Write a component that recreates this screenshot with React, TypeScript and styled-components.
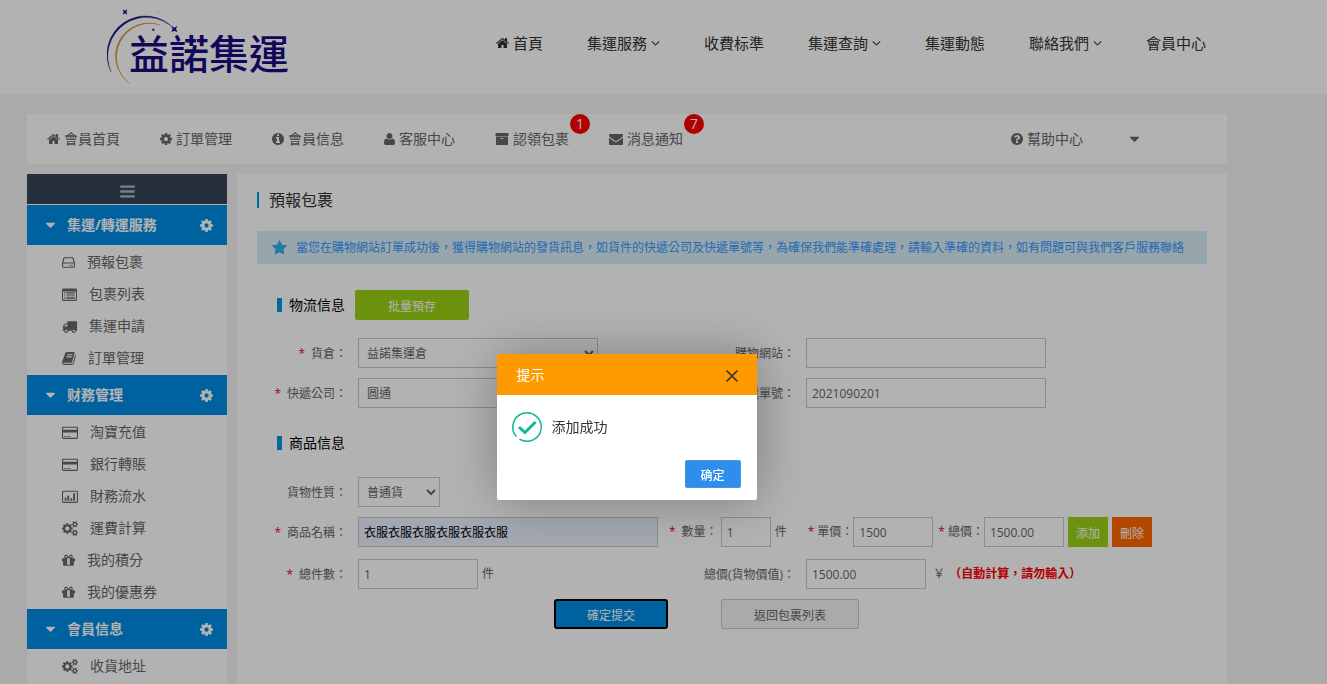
import React from "react";
import styled, { createGlobalStyle, css } from "styled-components";

const GlobalStyle = createGlobalStyle`
  * { box-sizing: border-box; }
  body {
    margin: 0;
    background: #f4f4f4;
    color: #666;
    font: 12px/20px "Open Sans", "Noto Sans CJK TC", sans-serif;
  }
  a { color: inherit; text-decoration: none; }
  ul, h1, h2, h3, p { margin: 0; padding: 0; list-style: none; font-weight: 400; }
  button, input, select { font: inherit; color: inherit; margin: 0; }
`;

/* ---------- icons ---------- */

const disc =
  "m640 -480q0 209-103 385.5t-279.5 279.5-385.5 103-385.5-103-279.5-279.5-103-385.5 103-385.5 279.5-279.5 385.5-103 385.5 103 279.5 279.5 103 385.5z";
const smallCog =
  "v140q0 16-149 31-12 27-30 52 51 113 51 138 0 4-4 7-122 71-124 71-8 0-46-47t-52-68q-20 2-30 2t-30-2q-14 21-52 68t-46 47q-2 0-124-71-4-3-4-7 0-25 51-138-18-25-30-52-149-15-149-31v-140q0-16 149-31 13-29 30-52-51-113-51-138 0-4 4-7 4-2 35-20t59-34 30-16q8 0 46 46.5t52 67.5q20-2 30-2t30 2q51-71 92-112l6-2q4 0 124 70 4 3 4 7 0 25-51 138 17 23 30 52 149 15 149 31z";

const icons = {
  home: [64, 1664, "M1472 992v480q0 26-19 45t-45 19h-384v-384h-256v384h-384q-26 0-45-19t-19-45v-480q0-1 .5-3t.5-3l575-474 575 474q1 2 1 6zm223-69l-62 74q-8 9-21 11h-3q-13 0-21-7l-692-577-692 577q-12 8-24 7-13-2-21-11l-62-74q-8-10-7-23.5t11-21.5l719-599q32-26 76-26t76 26l244 204v-195q0-14 9-23t23-9h192q14 0 23 9t9 23v408l219 182q10 8 11 21.5t-7 23.5z"],
  cog: [128, 1536, "M1152 896q0-106-75-181t-181-75-181 75-75 181 75 181 181 75 181-75 75-181zm512-109v222q0 12-8 23t-20 13l-185 28q-19 54-39 91 35 50 107 138 10 12 10 25t-9 23q-27 37-99 108t-94 71q-12 0-26-9l-138-108q-44 23-91 38-16 136-29 186-7 28-36 28h-222q-14 0-24.5-8.5t-11.5-21.5l-28-184q-49-16-90-37l-141 107q-10 9-25 9-14 0-25-11-126-114-165-168-7-10-7-23 0-12 8-23 15-21 51-66.5t54-70.5q-27-50-41-99l-183-27q-13-2-21-12.5t-8-23.5v-222q0-12 8-23t19-13l186-28q14-46 39-92-40-57-107-138-10-12-10-24 0-10 9-23 26-36 98.5-107.5t94.5-71.5q13 0 26 10l138 107q44-23 91-38 16-136 29-186 7-28 36-28h222q14 0 24.5 8.5t11.5 21.5l28 184q49 16 90 37l142-107q9-9 24-9 13 0 25 10 129 119 165 170 7 8 7 22 0 12-8 23-15 21-51 66.5t-54 70.5q26 50 41 98l183 28q13 2 21 12.5t8 23.5z"],
  info: [128, 1536, "M1152 1376v-160q0-14-9-23t-23-9h-96v-512q0-14-9-23t-23-9h-320q-14 0-23 9t-9 23v160q0 14 9 23t23 9h96v320h-96q-14 0-23 9t-9 23v160q0 14 9 23t23 9h448q14 0 23-9t9-23zm-128-896v-160q0-14-9-23t-23-9h-192q-14 0-23 9t-9 23v160q0 14 9 23t23 9h192q14 0 23-9t9-23z" + disc.replace("m640 -480", "m640 416")],
  user: [192, 1408, "M1600 1405q0 120-73 189.5t-194 69.5h-874q-121 0-194-69.5t-73-189.5q0-53 3.5-103.5t14-109 26.5-108.500 43-97.500 62-81 85.500-53.500 111.500-20q9 0 42 21.500t74.500 48 108 48 133.500 21.500 133.500-21.500 108-48 74.500-48 42-21.500q61 0 111.500 20t85.500 53.500 62 81 43 97.500 26.500 108.500 14 109 3.500 103.500zm-320-893q0 159-112.500 271.500t-271.500 112.500-271.500-112.500-112.500-271.500 112.500-271.500 271.500-112.500 271.500 112.500 112.500 271.500z"],
  archive: [0, 1792, "M1088 832q0-26-19-45t-45-19h-256q-26 0-45 19t-19 45 19 45 45 19h256q26 0 45-19t19-45zm576-192v960q0 26-19 45t-45 19h-1408q-26 0-45-19t-19-45v-960q0-26 19-45t45-19h1408q26 0 45 19t19 45zm64-448v256q0 26-19 45t-45 19h-1536q-26 0-45-19t-19-45v-256q0-26 19-45t45-19h1536q26 0 45 19t19 45z"],
  envelope: [0, 1792, "M1792 710v794q0 66-47 113t-113 47h-1472q-66 0-113-47t-47-113v-794q44 49 101 87 362 246 497 345 57 42 92.5 65.5t94.5 48 110 24.5h2q51 0 110-24.5t94.5-48 92.5-65.5q170-123 498-345 57-39 100-87zm0-294q0 79-49 151t-122 123q-376 261-468 325-10 7-42.5 30.5t-54 38-52 32.5-57.5 27-50 9h-2q-23 0-50-9t-57.5-27-52-32.5-54-38-42.5-30.5q-91-64-262-182.5t-205-142.5q-62-42-117-115.5t-55-136.5q0-78 41.5-130t118.5-52h1472q65 0 112.5 47t47.5 113z"],
  question: [128, 1536, "M1024 1376v-192q0-14-9-23t-23-9h-192q-14 0-23 9t-9 23v192q0 14 9 23t23 9h192q14 0 23-9t9-23zm256-672q0-88-55.5-163t-138.5-116-170-41q-243 0-371 213-15 24 8 42l132 100q7 6 19 6 16 0 25-12 53-68 86-92 34-24 86-24 48 0 85.5 26t37.5 59q0 38-20 61t-68 45q-63 28-115.5 86.5t-52.5 125.5v36q0 14 9 23t23 9h192q14 0 23-9t9-23q0-19 21.5-49.5t54.5-49.5q32-18 49-28.5t46-35 44.5-48 28-60.5 12.500-81z" + disc.replace("m640 -480", "m384 192")],
  caret: [384, 1024, "M1408 704q0 26-19 45l-448 448q-19 19-45 19t-45-19l-448-448q-19-19-19-45t19-45 45-19h896q26 0 45 19t19 45z"],
  angle: [320, 1152, "M1395 736q0 13-10 23l-466 466q-10 10-23 10t-23-10l-466-466q-10-10-10-23t10-23l50-50q10-10 23-10t23 10l393 393 393-393q10-10 23-10t23 10l50 50q10 10 10 23z"],
  bars: [128, 1536, "M1664 1344v128q0 26-19 45t-45 19h-1408q-26 0-45-19t-19-45v-128q0-26 19-45t45-19h1408q26 0 45 19t19 45zm0-512v128q0 26-19 45t-45 19h-1408q-26 0-45-19t-19-45v-128q0-26 19-45t45-19h1408q26 0 45 19t19 45zm0-512v128q0 26-19 45t-45 19h-1408q-26 0-45-19t-19-45v-128q0-26 19-45t45-19h1408q26 0 45 19t19 45z"],
  star: [64, 1664, "M1728 647q0 22-26 48l-363 354 86 500q1 7 1 20 0 21-10.5 35.5t-30.5 14.5q-19 0-40-12l-449-236-449 236q-22 12-40 12-21 0-31.5-14.5t-10.5-35.5q0-6 2-20l86-500-364-354q-25-27-25-48 0-37 56-46l502-73 225-455q19-41 49-41t49 41l225 455 502 73q56 9 56 46z"],
  gift: [128, 1536, "M1055 1356v-716h-320v716q0 25 18 38.5t46 13.5h192q28 0 46-13.5t18-38.5zm-456-844h195l-126-161q-26-31-69-31-40 0-68 28t-28 68 28 68 68 28zm688-96q0-40-28-68t-68-28q-43 0-69 31l-125 161h194q40 0 68-28t28-68zm376 256v320q0 14-9 23t-23 9h-96v416q0 40-28 68t-68 28h-1088q-40 0-68-28t-28-68v-416h-96q-14 0-23-9t-9-23v-320q0-14 9-23t23-9h440q-93 0-158.5-65.5t-65.5-158.5 65.5-158.5 158.5-65.5q107 0 168 77l128 165 128-165q61-77 168-77 93 0 158.5 65.5t65.5 158.5-65.5 158.5-158.5 65.5h440q14 0 23 9t9 23z"],
  book: [64, 1664, "M1703 478q40 57 18 129l-275 906q-19 64-76.5 107.5t-122.5 43.5h-923q-77 0-148.5-53.5t-99.5-131.5q-24-67-2-127 0-4 3-27t4-37q1-8-3-21.5t-3-19.5q2-11 8-21t16.5-23.5 16.5-23.5q23-38 45-91.5t30-91.5q3-10 .5-30t-.5-28q3-11 17-28t17-23q21-36 42-92t25-90q1-9-2.5-32t.5-28q4-13 22-30.5t22-22.5q19-26 42.5-84.5t27.5-96.5q1-8-3-25.5t-2-26.5q2-8 9-18t18-23 17-21q8-12 16.5-30.5t15-35 16-36 19.5-32 26.5-23.5 36-11.5 47.5 5.5l-1 3q38-9 51-9h761q74 0 114 56t18 130l-274 906q-36 119-71.5 153.5t-128.5 34.5h-869q-27 0-38 15-11 16-1 43 24 70 144 70h923q29 0 56-15.5t35-41.5l300-987q7-22 5-57 38 15 59 43zm-1064 2q-4 13 2 22.5t20 9.5h608q13 0 25.5-9.5t16.5-22.5l21-64q4-13-2-22.5t-20-9.5h-608q-13 0-25.5 9.5t-16.5 22.5zm-83 256q-4 13 2 22.5t20 9.5h608q13 0 25.5-9.5t16.5-22.5l21-64q4-13-2-22.5t-20-9.5h-608q-13 0-25.5 9.5t-16.5 22.5z"],
  truck: [0, 1792, "M640 1408q0-52-38-90t-90-38-90 38-38 90 38 90 90 38 90-38 38-90zm-384-512h384v-256h-158q-13 0-22 9l-195 195q-9 9-9 22v30zm1280 512q0-52-38-90t-90-38-90 38-38 90 38 90 90 38 90-38 38-90zm256-1088v1024q0 15-4 26.5t-13.5 18.5-16.5 11.5-23.5 6-22.5 2-25.5 0-22.5-.5q0 106-75 181t-181 75-181-75-75-181h-384q0 106-75 181t-181 75-181-75-75-181h-64q-3 0-22.5.5t-25.5 0-22.5-2-23.5-6-16.5-11.5-13.5-18.5-4-26.5q0-26 19-45t45-19v-320q0-8-.5-35t0-38 2.5-34.5 6.5-37 14-30.5 22.5-30l198-198q19-19 50.5-32t58.5-13h160v-192q0-26 19-45t45-19h1024q26 0 45 19t19 45z"],
  cogs: [-64, 1920, "M832 896q0-106-75-181t-181-75-181 75-75 181 75 181 181 75 181-75 75-181zm768 512q0-52-38-90t-90-38-90 38-38 90q0 53 37.5 90.5t90.5 37.5 90.5-37.5 37.5-90.5zm0-1024q0-52-38-90t-90-38-90 38-38 90q0 53 37.5 90.5t90.5 37.5 90.5-37.5 37.5-90.5zm-384 421v185q0 10-7 19.5t-16 10.5l-155 24q-11 35-32 76 34 48 90 115 7 11 7 20 0 12-7 19-23 30-82.5 89.5t-78.5 59.5q-11 0-21-7l-115-90q-37 19-77 31-11 108-23 155-7 24-30 24h-186q-11 0-20-7.5t-10-17.5l-23-153q-34-10-75-31l-118 89q-7 7-20 7-11 0-21-8-144-133-144-160 0-9 7-19 10-14 41-53t47-61q-23-44-35-82l-152-24q-10-1-17-9.5t-7-19.5v-185q0-10 7-19.5t16-10.5l155-24q11-35 32-76-34-48-90-115-7-11-7-20 0-12 7-20 22-30 82-89t79-59q11 0 21 7l115 90q34-18 77-32 11-108 23-154 7-24 30-24h186q11 0 20 7.5t10 17.5l23 153q34 10 75 31l118-89q8-7 20-7 11 0 21 8 144 133 144 160 0 8-7 19-12 16-42 54t-45 60q23 48 34 82l152 23q10 2 17 10.5t7 19.5zm640 533" + smallCog + "m0-1024" + smallCog],
  hdd: [0, 1536, "M250 256h1036q60 0 95 60l155 640v420q0 160-160 160h-1216q-160 0-160-160v-420l155-640q35-60 95-60zM290 384l-130 512h1216l-130-512zM128 1024v340q0 44 44 44h1192q44 0 44-44v-340zM840 1150h160v130h-160zM1100 1150h160v130h-160z"],
  list: [0, 1792, "M160 192h1472q160 0 160 160v1152q0 160-160 160h-1472q-160 0-160-160v-1152q0-160 160-160zM128 540v940q0 56 56 56h1424q56 0 56-56v-940zM256 640h128v128h-128zM256 896h128v128h-128zM256 1152h128v128h-128zM512 640h1024v128h-1024zM512 896h1024v128h-1024zM512 1152h1024v128h-1024zM256 1340h128v80h-128zM512 1340h1024v80h-1024z"],
  card: [0, 1920, "M160 192h1600q160 0 160 160v1152q0 160-160 160h-1600q-160 0-160-160v-1152q0-160 160-160zM128 352v224h1664v-224q0-32-32-32h-1600q-32 0-32 32zM128 900v604q0 32 32 32h1600q32 0 32-32v-604zM256 1344h256v96h-256zM600 1344h384v96h-384z"],
  chart: [0, 1920, "M160 192h1600q160 0 160 160v1152q0 160-160 160h-1600q-160 0-160-160v-1152q0-160 160-160zM160 320q-32 0-32 32v1152q0 32 32 32h1600q32 0 32-32v-1152q0-32-32-32zM320 1024h220v384h-220zM640 768h220v640h-220zM1000 1100h220v308h-220zM1340 512h220v896h-220z"],
} as const;

type IconName = keyof typeof icons;

const Glyph = styled.svg`
  flex: none;
  fill: currentColor;
  fill-rule: evenodd;
`;

function Icon({ name, size = 14 }: { name: IconName; size?: number }) {
  const [x, w, d] = icons[name];
  return (
    <Glyph viewBox={`${x} 0 ${w} 1792`} width={Math.round((w * size) / 1792)} height={size} aria-hidden="true">
      <path d={d} />
    </Glyph>
  );
}

/* ---------- page header ---------- */

const Page = styled.div`
  min-height: 100vh;
  display: flex;
  flex-direction: column;
`;

const Header = styled.header`
  height: 94px;
  padding: 0 121px 0 107px;
  display: flex;
  align-items: center;
  justify-content: space-between;
  background: #fff;
`;

const Logo = styled.a`
  position: relative;
  height: 94px;
  padding: 15px 0 0 22px;
  color: #1e0b80;
  font-size: 40px;
  line-height: 78px;
  font-weight: 500;
  white-space: nowrap;
`;

const LogoArc = styled.svg`
  position: absolute;
  left: 0;
  top: 7px;
`;

const SiteNav = styled.nav`
  display: flex;
  gap: 44px;
  padding-bottom: 8px;
  color: #333;
  font-size: 15px;
  white-space: nowrap;
`;

const NavLink = styled.a`
  display: flex;
  align-items: center;
  gap: 4px;
`;

/* ---------- member bar ---------- */

const Wrapper = styled.div`
  flex: 1;
  display: flex;
  flex-direction: column;
  gap: 10px;
  margin: 20px 100px 0 27px;
`;

const MemberBar = styled.nav`
  height: 50px;
  display: flex;
  padding: 0 88px 0 20px;
  background: #fff;
  font-size: 14px;
  white-space: nowrap;
`;

const MemberLink = styled(NavLink)<{ $end?: boolean }>`
  position: relative;
  margin-right: 40px;
  ${(p) => p.$end && css`margin: 0 47px 0 auto;`}
`;

const Badge = styled.span`
  position: absolute;
  top: 0;
  left: 100%;
  width: 20px;
  height: 20px;
  margin-left: 1px;
  border-radius: 50%;
  background: #f00;
  color: #fff;
  text-align: center;
`;

const CaretButton = styled.button`
  display: flex;
  align-items: center;
  padding: 0;
  border: 0;
  background: none;
`;

const Columns = styled.div`
  flex: 1;
  display: flex;
  gap: 10px;
`;

/* ---------- sidebar ---------- */

const Sidebar = styled.aside`
  flex: none;
  width: 200px;
  background: #fff;
  font-size: 14px;
`;

const Collapse = styled.button`
  width: 100%;
  height: 30px;
  display: flex;
  align-items: center;
  justify-content: center;
  padding: 5px 0 0;
  border: 0;
  background: #3a4456;
  color: #aeb9c2;
`;

const GroupTitle = styled.h2`
  display: flex;
  align-items: center;
  height: 40px;
  margin: 1px 0;
  padding: 0 14px 0 19px;
  background: #008ce4;
  color: #fff;
  font-size: 14px;
  font-weight: 700;
  gap: 12px;
`;

const GroupName = styled.span`
  flex: 1;
`;

const MenuLink = styled.a`
  display: flex;
  align-items: center;
  gap: 12px;
  height: 32px;
  padding-left: 35px;
`;

/* ---------- content ---------- */

const Main = styled.main`
  flex: 1;
  min-width: 0;
  padding: 18px 20px;
  background: #fff;
`;

const PageTitle = styled.h1`
  padding-left: 10px;
  border-left: 2px solid #0099e5;
  color: #333;
  font-size: 16px;
  line-height: 16px;
`;

const Notice = styled.p`
  display: flex;
  align-items: center;
  gap: 9px;
  height: 33px;
  margin-top: 23px;
  padding-left: 15px;
  background: #d9edf7;
  color: #39f;
  white-space: nowrap;

  svg { color: #31b0ee; }
`;

const Section = styled.div<{ $gap: number }>`
  display: flex;
  align-items: center;
  gap: 10px;
  height: 30px;
  margin-top: ${(p) => p.$gap}px;
  padding-left: 20px;
`;

const SectionTitle = styled.h3`
  padding-left: 7px;
  border-left: 5px solid #0099e5;
  color: #000;
  font-size: 14px;
  line-height: 14px;
`;

const Row = styled.div<{ $gap?: number }>`
  display: grid;
  grid-template-columns: 101px 338px 110px 1fr;
  align-items: center;
  height: 30px;
  margin-top: ${(p) => p.$gap ?? 10}px;
  white-space: nowrap;
`;

const Label = styled.label`
  padding: 2px 11px 0 0;
  text-align: right;
`;

const Star = styled.span<{ $tight?: boolean }>`
  margin-right: ${(p) => (p.$tight ? 3 : 6)}px;
  color: #e60012;
`;

const control = css<{ $w: number }>`
  width: ${(p) => p.$w}px;
  height: 30px;
  border: 1px solid #c8c8c8;
  border-radius: 0;
  background: #fff;
`;

const Input = styled.input<{ $w: number; $filled?: boolean }>`
  ${control}
  padding: 0 5px;
  ${(p) => p.$filled && css`background: #e8f0fe; color: #000;`}
`;

const Select = styled.select<{ $w: number }>`
  ${control}
  padding: 0 4px;
`;

const Inline = styled.div`
  display: flex;
  align-items: center;
  gap: 4px;
`;

const InlineLabel = styled.label<{ $before: number; $after?: number }>`
  margin-left: ${(p) => p.$before}px;
  margin-right: ${(p) => p.$after ?? -4}px;
`;

const Warning = styled.strong`
  color: #f00;
  font-weight: 700;
`;

const tones = {
  green: css`background: #9bd214; color: #fff;`,
  orange: css`background: #ff6600; color: #fff;`,
  blue: css`background: #008ce4; color: #fff; border: 2px solid #000; border-radius: 3px;`,
  plain: css`background: #f4f4f4; border: 1px solid #c8c8c8;`,
};

const Button = styled.button<{ $tone: keyof typeof tones; $w: number; $square?: boolean }>`
  width: ${(p) => p.$w}px;
  height: 30px;
  padding: 3px 0 0;
  border: 0;
  border-radius: ${(p) => (p.$square ? 0 : 2)}px;
  white-space: nowrap;
  ${(p) => tones[p.$tone]}
`;

const Actions = styled.div`
  display: flex;
  gap: 53px;
  margin-top: 10px;
  padding-left: 297px;
`;

const Goods = styled(Inline)`
  grid-column: 2 / -1;
`;

/* ---------- dialog ---------- */

const Shade = styled.div`
  position: fixed;
  inset: 0;
  background: rgba(0, 0, 0, 0.3);
`;

const Dialog = styled.div`
  position: fixed;
  top: 354px;
  left: calc(50% - 167px);
  width: 260px;
  border-radius: 2px;
  overflow: hidden;
  background: #fff;
  color: #333;
  font-size: 14px;
  box-shadow: 1px 1px 50px rgba(0, 0, 0, 0.3);
`;

const DialogHead = styled.div`
  display: flex;
  align-items: center;
  justify-content: space-between;
  height: 41px;
  padding: 1px 19px 0 20px;
  background: #f90;
`;

const DialogTitle = styled.h2`
  color: #fff;
  font-size: 14px;
`;

const CloseButton = styled.button`
  display: flex;
  padding: 2px 0 0;
  border: 0;
  background: none;
`;

const DialogBody = styled.div`
  display: flex;
  align-items: center;
  gap: 10px;
  height: 65px;
  padding: 0 0 2px 15px;
`;

const DialogFoot = styled.div`
  display: flex;
  justify-content: flex-end;
  padding: 0 16px 12px;
`;

const OkButton = styled.button`
  width: 56px;
  height: 28px;
  padding: 3px 0 0;
  border: 1px solid #4898d5;
  border-radius: 2px;
  background: #2e8ded;
  color: #fff;
  font-size: 12px;
  font-weight: 500;
`;

/* ---------- data ---------- */

const siteLinks: { text: string; home?: boolean; menu?: boolean }[] = [
  { text: "首頁", home: true },
  { text: "集運服務", menu: true },
  { text: "收費标準" },
  { text: "集運查詢", menu: true },
  { text: "集運動態" },
  { text: "聯絡我們", menu: true },
  { text: "會員中心" },
];

const memberLinks: { icon: IconName; text: string; count?: number }[] = [
  { icon: "home", text: "會員首頁" },
  { icon: "cog", text: "訂單管理" },
  { icon: "info", text: "會員信息" },
  { icon: "user", text: "客服中心" },
  { icon: "archive", text: "認領包裹", count: 1 },
  { icon: "envelope", text: "消息通知", count: 7 },
];

const groups: { title: string; items: [IconName, string][] }[] = [
  {
    title: "集運/轉運服務",
    items: [["hdd", "預報包裹"], ["list", "包裹列表"], ["truck", "集運申請"], ["book", "訂單管理"]],
  },
  {
    title: "财務管理",
    items: [["card", "淘寶充值"], ["card", "銀行轉賬"], ["chart", "財務流水"], ["cogs", "運費計算"], ["gift", "我的積分"], ["gift", "我的優惠券"]],
  },
  { title: "會員信息", items: [["cogs", "收貨地址"]] },
];

export default function App() {
  return (
    <>
      <GlobalStyle />
      <Page>
        <Header>
          <Logo href="#">
            <LogoArc viewBox="48 21 219 240" width="73" height="80" aria-hidden="true">
              <path d="M60 215A115.500 115.500 0 0 1 250 87A116.500 116.500 0 0 0 60 215Z" fill="#1e0b80" stroke="#1e0b80" strokeWidth="1" />
              <path d="M115 250A100 100 0 0 1 208 75A100.700 100.700 0 0 0 115 250Z" fill="#cf8a1c" stroke="#cf8a1c" strokeWidth="1" />
              <path d="M95 28l7 4 7-4-3 8 3 8-7-4-7 4 3-8zM241 78l9 5 9-5-4 9 4 10-9-5-9 5 4-10zM184 86h6v6h-6z" fill="#1e0b80" />
              <path d="M198 33h4v4h-4z" fill="#e6c88a" />
            </LogoArc>
            益諾集運
          </Logo>
          <SiteNav>
            {siteLinks.map((l) => (
              <NavLink href="#" key={l.text}>
                {l.home && <Icon name="home" />}
                {l.text}
                {l.menu && <Icon name="angle" />}
              </NavLink>
            ))}
          </SiteNav>
        </Header>

        <Wrapper>
          <MemberBar>
            {memberLinks.map((l) => (
              <MemberLink href="#" key={l.text}>
                <Icon name={l.icon} />
                {l.text}
                {l.count && <Badge>{l.count}</Badge>}
              </MemberLink>
            ))}
            <MemberLink href="#" $end>
              <Icon name="question" />
              幫助中心
            </MemberLink>
            <CaretButton aria-label="更多">
              <Icon name="caret" size={16} />
            </CaretButton>
          </MemberBar>

          <Columns>
            <Sidebar>
              <Collapse aria-label="收起">
                <Icon name="bars" size={17} />
              </Collapse>
              {groups.map((g) => (
                <React.Fragment key={g.title}>
                  <GroupTitle>
                    <Icon name="caret" size={16} />
                    <GroupName>{g.title}</GroupName>
                    <Icon name="cog" size={15} />
                  </GroupTitle>
                  <ul>
                    {g.items.map(([icon, text]) => (
                      <li key={text}>
                        <MenuLink href="#">
                          <Icon name={icon} size={15} />
                          {text}
                        </MenuLink>
                      </li>
                    ))}
                  </ul>
                </React.Fragment>
              ))}
            </Sidebar>

            <Main>
              <PageTitle>預報包裹</PageTitle>
              <Notice>
                <Icon name="star" size={16} />
                當您在購物網站訂單成功後，獲得購物網站的發貨訊息，如貨件的快遞公司及快遞單號等，為確保我們能準確處理，請輸入準確的資料，如有問題可與我們客戶服務聯絡
              </Notice>

              <Section $gap={26}>
                <SectionTitle>物流信息</SectionTitle>
                <Button $tone="green" $w={114}>批量預存</Button>
              </Section>
              <Row $gap={18}>
                <Label htmlFor="depot"><Star>*</Star>貨倉：</Label>
                <Select id="depot" $w={240}><option>益諾集運倉</option></Select>
                <Label htmlFor="shop">購物網站：</Label>
                <Input id="shop" $w={240} />
              </Row>
              <Row>
                <Label htmlFor="courier"><Star>*</Star>快遞公司：</Label>
                <Select id="courier" $w={240}><option>圆通</option></Select>
                <Label htmlFor="tracking"><Star>*</Star>快遞單號：</Label>
                <Input id="tracking" $w={240} defaultValue="2021090201" />
              </Row>

              <Section $gap={20}>
                <SectionTitle>商品信息</SectionTitle>
              </Section>
              <Row $gap={19}>
                <Label htmlFor="kind">貨物性質：</Label>
                <Select id="kind" $w={82}><option>普通貨</option></Select>
              </Row>
              <Row>
                <Label htmlFor="goods"><Star>*</Star>商品名稱：</Label>
                <Goods>
                  <Input id="goods" $w={300} $filled defaultValue="衣服衣服衣服衣服衣服衣服" />
                  <InlineLabel htmlFor="qty" $before={7} $after={-1}><Star>*</Star>數量：</InlineLabel>
                  <Input id="qty" $w={50} defaultValue="1" />
                  件
                  <InlineLabel htmlFor="price" $before={17}><Star $tight>*</Star>單價：</InlineLabel>
                  <Input id="price" $w={80} defaultValue="1500" />
                  <InlineLabel htmlFor="sum" $before={1}><Star $tight>*</Star>總價：</InlineLabel>
                  <Input id="sum" $w={80} defaultValue="1500.00" />
                  <Button $tone="green" $w={40} $square>添加</Button>
                  <Button $tone="orange" $w={40} $square>刪除</Button>
                </Goods>
              </Row>
              <Row $gap={12}>
                <Label htmlFor="count"><Star>*</Star>總件數：</Label>
                <Inline>
                  <Input id="count" $w={120} defaultValue="1" />
                  件
                </Inline>
                <Label htmlFor="total">總價(貨物價值)：</Label>
                <Inline>
                  <Input id="total" $w={120} defaultValue="1500.00" />
                  <span>&nbsp;￥</span>
                  <Warning>（自動計算，請勿輸入）</Warning>
                </Inline>
              </Row>
              <Actions>
                <Button $tone="blue" $w={114}>確定提交</Button>
                <Button $tone="plain" $w={138}>返回包裹列表</Button>
              </Actions>
            </Main>
          </Columns>
        </Wrapper>
      </Page>

      <Shade />
      <Dialog role="dialog" aria-labelledby="dialog-title">
        <DialogHead>
          <DialogTitle id="dialog-title">提示</DialogTitle>
          <CloseButton aria-label="關閉">
            <svg width="12" height="12" viewBox="0 0 12 12" stroke="#2d2c3b" strokeWidth="1.500" fill="none" aria-hidden="true">
              <path d="M.5.5l11 11M11.500.5l-11 11" />
            </svg>
          </CloseButton>
        </DialogHead>
        <DialogBody>
          <svg width="30" height="30" viewBox="0 0 30 30" stroke="#10b899" fill="none" aria-hidden="true">
            <path d="M7.500 27.100A14.200 14.200 0 1 0 4.500 24.600" strokeWidth="1.500" />
            <path d="M7 15l6 5.500L23.500 10" strokeWidth="3" />
          </svg>
          添加成功
        </DialogBody>
        <DialogFoot>
          <OkButton>确定</OkButton>
        </DialogFoot>
      </Dialog>
    </>
  );
}
